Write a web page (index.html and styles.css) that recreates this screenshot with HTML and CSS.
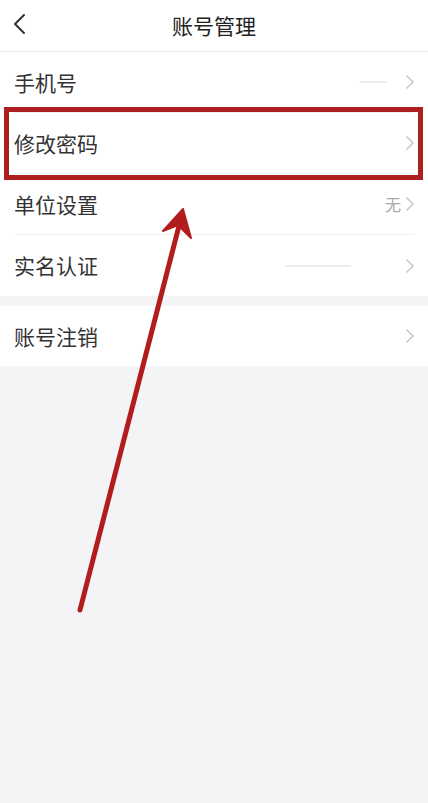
FILE: index.html
```html
<!DOCTYPE html>
<html lang="zh">
<head>
<meta charset="utf-8">
<link rel="stylesheet" href="styles.css">
</head>
<body>
<div class="page">
  <header class="topbar">
    <svg class="back" width="14" height="22" viewBox="0 0 14 22"><path d="M12 2 L3 11 L12 20" fill="none" stroke="#333" stroke-width="2" stroke-linecap="round" stroke-linejoin="round"/></svg>
    <h1 class="title">账号管理</h1>
  </header>
  <section class="group">
    <div class="row">
      <span class="label">手机号</span>
      <span class="right"><span class="blur short"></span><svg class="chev" width="10" height="16" viewBox="0 0 10 16"><path d="M2 2 L8 8 L2 14" fill="none" stroke="#c8c8c8" stroke-width="1.6" stroke-linecap="round" stroke-linejoin="round"/></svg></span>
    </div>
    <div class="row">
      <span class="label">修改密码</span>
      <span class="right"><svg class="chev" width="10" height="16" viewBox="0 0 10 16"><path d="M2 2 L8 8 L2 14" fill="none" stroke="#c8c8c8" stroke-width="1.6" stroke-linecap="round" stroke-linejoin="round"/></svg></span>
    </div>
    <div class="row">
      <span class="label">单位设置</span>
      <span class="right"><span class="value">无</span><svg class="chev" width="10" height="16" viewBox="0 0 10 16"><path d="M2 2 L8 8 L2 14" fill="none" stroke="#c8c8c8" stroke-width="1.6" stroke-linecap="round" stroke-linejoin="round"/></svg></span>
    </div>
    <div class="row">
      <span class="label">实名认证</span>
      <span class="right"><span class="blur long"></span><svg class="chev" width="10" height="16" viewBox="0 0 10 16"><path d="M2 2 L8 8 L2 14" fill="none" stroke="#c8c8c8" stroke-width="1.6" stroke-linecap="round" stroke-linejoin="round"/></svg></span>
    </div>
  </section>
  <section class="group second">
    <div class="row">
      <span class="label">账号注销</span>
      <span class="right"><svg class="chev" width="10" height="16" viewBox="0 0 10 16"><path d="M2 2 L8 8 L2 14" fill="none" stroke="#c8c8c8" stroke-width="1.6" stroke-linecap="round" stroke-linejoin="round"/></svg></span>
    </div>
  </section>
  <div class="highlight"></div>
  <svg class="arrow" width="428" height="803" viewBox="0 0 428 803">
    <line x1="80" y1="610" x2="180" y2="222" stroke="#b31c1c" stroke-width="5" stroke-linecap="round"/>
    <path d="M183 209 L163 231 L178 225 L191 238 Z" fill="#b31c1c" stroke="#b31c1c" stroke-width="2" stroke-linejoin="round"/>
  </svg>
</div>
</body>
</html>
```
FILE: styles.css
```css
* { box-sizing: border-box; }
html, body { margin: 0; padding: 0; }
body {
  background: #f4f4f6;
  font-family: "Noto Sans CJK SC", "Noto Sans", sans-serif;
  color: #333;
}
.page {
  position: relative;
  width: 428px;
  min-height: 803px;
}
.topbar {
  height: 52px;
  background: #fff;
  border-bottom: 1px solid #ededed;
  display: flex;
  align-items: center;
  justify-content: center;
  position: relative;
}
.back {
  position: absolute;
  left: 12px;
  top: 13px;
}
.title {
  margin: 0;
  font-size: 21px;
  font-weight: 400;
  color: #222;
  line-height: 1;
}
.group {
  background: #fff;
}
.group.second {
  margin-top: 10px;
}
.row {
  height: 61px;
  margin: 0 14px;
  display: flex;
  align-items: center;
  justify-content: space-between;
  border-bottom: 1px solid #efefef;
}
.group .row:last-child { border-bottom: none; }
.second .row { height: 60px; }
.label {
  font-size: 21px;
  color: #333;
  line-height: 1;
}
.right {
  display: flex;
  align-items: center;
  gap: 4px;
}
.chev { display: block; margin-right: -1px; }
.value {
  font-size: 16px;
  color: #aaa;
  line-height: 1;
}
.blur {
  display: block;
  height: 2px;
  background: #ececec;
  border-radius: 1px;
}
.blur.short { width: 28px; margin-right: 14px; }
.blur.long { width: 66px; margin-right: 50px; }
.highlight {
  position: absolute;
  left: 4px;
  top: 107px;
  width: 419px;
  height: 73px;
  border: 5px solid #ad1e1e;
  pointer-events: none;
}
.arrow {
  position: absolute;
  left: 0;
  top: 0;
  pointer-events: none;
}
```
